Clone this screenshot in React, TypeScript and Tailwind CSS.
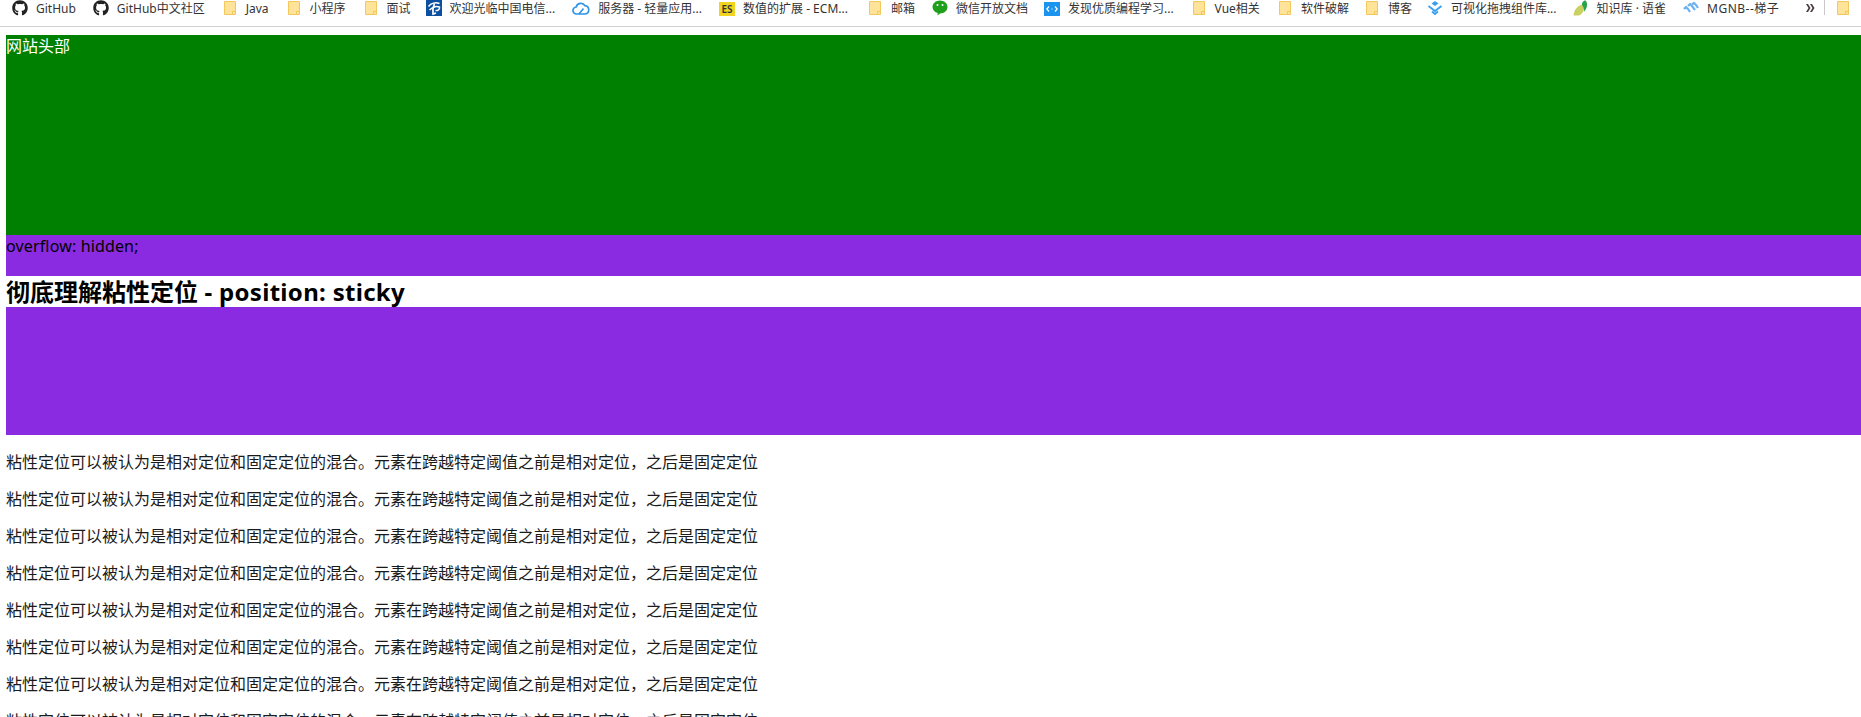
import React from 'react';
import { FaGithub } from 'react-icons/fa';

const cjk = "font-['Noto_Sans','Noto_Sans_CJK_SC',sans-serif]";

const Folder = () => (
  <svg width="16" height="16" viewBox="0 0 16 16" className="shrink-0">
    <path d="M2.5 1.500h11v13h-11z" fill="#ffe398" stroke="#f2c75c" />
    <path d="M10.500 14.500v-3h3" fill="#ffe398" stroke="#f2c75c" />
  </svg>
);

const GitHub = () => <FaGithub className="w-4 h-4 shrink-0 text-[#222]" />;

const Telecom = () => (
  <svg width="16" height="16" viewBox="0 0 16 16" className="shrink-0">
    <rect width="16" height="16" fill="#0b4f9e" />
    <path d="M2.500 6.500C5 3 9.500 2 13.500 3.500M3.500 10C6 7.500 10 5.500 13.500 7 14 9.500 11.500 11 9.500 10.500" fill="none" stroke="#fff" strokeWidth="1.500" />
    <path d="M8.500 3.500C7 7 6.500 10 7 14l3-1" fill="none" stroke="#fff" strokeWidth="1.700" />
  </svg>
);

const Cloud = () => (
  <svg width="18" height="16" viewBox="0 0 18 16" className="shrink-0">
    <path d="M4.700 14a3.500 3.500 0 0 1-.5-7A4.800 4.800 0 0 1 13 5.700 4.200 4.200 0 0 1 13.300 14z" fill="none" stroke="#2f95e8" strokeWidth="1.700" />
    <path d="M7 14l4.500-5.500" stroke="#2f95e8" strokeWidth="1.700" />
  </svg>
);

const Es = () => (
  <div className="w-4 h-[14px] mt-[2px] shrink-0 bg-[#f0d41f] flex items-center justify-center text-[10px] font-semibold leading-none text-[#333]">ES</div>
);

const Wechat = () => (
  <svg width="16" height="16" viewBox="0 0 16 16" className="shrink-0">
    <path d="M8 0.500c4.200 0 7.500 2.900 7.500 6.500s-3.300 6.500-7.500 6.500l-2.500 2 .2-2.400C2.700 12.200.5 9.800.5 7 .5 3.400 3.800.5 8 .5z" fill="#1f9f1c" />
    <circle cx="5.500" cy="5" r="1" fill="#fff" />
    <circle cx="10.500" cy="5" r="1" fill="#fff" />
  </svg>
);

const Code = () => (
  <svg width="16" height="16" viewBox="0 0 16 16" className="shrink-0">
    <rect y="2" width="16" height="14" fill="#1a94ee" />
    <path d="M5 6.500L2.800 9 5 11.500M11 6.500L13.200 9 11 11.500M7.500 9h1" fill="none" stroke="#fff" strokeWidth="1.200" />
  </svg>
);

const Chevrons = () => (
  <svg width="16" height="16" viewBox="0 0 16 16" className="shrink-0">
    <path d="M8 1l-3.500 2.500L8 6l3.500-2.500z" fill="#3aa0ee" />
    <path d="M1.500 6L8 11l6.500-5M5 11.500L8 14l3-2.500" fill="none" stroke="#3aa0ee" strokeWidth="1.800" />
  </svg>
);

const Yuque = () => (
  <svg width="16" height="16" viewBox="0 0 16 16" className="shrink-0">
    <path d="M0.500 15.500C1 10 4.500 5.500 9.500 4.500c2.500 3 1.500 9-3.500 11z" fill="#c9d163" />
    <path d="M9 5c-.3-2 1-4.500 3.500-4.500C15 3 14.500 8 11 11.500 11 9 10.500 6.500 9 5z" fill="#2ba24c" />
  </svg>
);

const Waves = () => (
  <svg width="16" height="16" viewBox="0 0 16 16" className="shrink-0">
    <path d="M1 9l2-2 2 2 2 3M5 6l2-2 2 2 3 4M9 4l2-1 2 2 2 3" fill="none" stroke="#6db2ef" strokeWidth="2.200" />
  </svg>
);

const bookmarks: { icon: React.ReactNode; label: string; gap?: string; text?: string }[] = [
  { icon: <GitHub />, label: 'GitHub' },
  { icon: <GitHub />, label: 'GitHub中文社区' },
  { icon: <Folder />, label: 'Java' },
  { icon: <Folder />, label: '小程序' },
  { icon: <Folder />, label: '面试', gap: 'mr-[15px]' },
  { icon: <Telecom />, label: '欢迎光临中国电信...' },
  { icon: <Cloud />, label: '服务器 - 轻量应用...' },
  { icon: <Es />, label: '数值的扩展 - ECM...', gap: 'mr-[19px]' },
  { icon: <Folder />, label: '邮箱' },
  { icon: <Wechat />, label: '微信开放文档', gap: 'mr-[16px]' },
  { icon: <Code />, label: '发现优质编程学习...' },
  { icon: <Folder />, label: 'Vue相关' },
  { icon: <Folder />, label: '软件破解', gap: 'mr-[15px]' },
  { icon: <Folder />, label: '博客', gap: 'mr-[15px]' },
  { icon: <Chevrons />, label: '可视化拖拽组件库...', gap: 'mr-[16px]' },
  { icon: <Yuque />, label: '知识库 · 语雀' },
  { icon: <Waves />, label: 'MGNB--梯子', gap: 'mr-[27px]', text: 'tracking-[0.5px]' },
];

const line = '粘性定位可以被认为是相对定位和固定定位的混合。元素在跨越特定阈值之前是相对定位，之后是固定定位';

export default function App() {
  return (
    <div className={`h-[717px] overflow-hidden bg-white text-black ${cjk}`}>
      <div className="h-[27px] border-b border-[#d0d0d0] flex items-start pl-3 text-xs text-[#333] whitespace-nowrap overflow-hidden">
        {bookmarks.map((b, i) => (
          <div key={i} className={`flex items-start gap-2 ${b.gap ?? 'mr-[17px]'}`}>
            {b.icon}
            <span className={`leading-[18px] ${b.text ?? ''}`}>{b.label}</span>
          </div>
        ))}
        <svg width="9" height="8" viewBox="0 0 9 8" className="mt-[4px] shrink-0">
          <path d="M0 0h2l2.500 4L2 8H0l2.500-4zM4 0h2l2.500 4L6 8H4l2.500-4z" fill="#4a3a40" />
        </svg>
        <div className="ml-[9px] w-px h-[15px] bg-[#c8c8c8] shrink-0" />
        <div className="ml-[10px]"><Folder /></div>
      </div>

      <div className="pl-[6px] pt-2">
        <div className="h-[200px] bg-[#008000] text-white text-base leading-[23px]">网站头部</div>
        <div className="h-[41px] bg-[#8a2be2] text-base leading-[23px] tracking-[0.15px]">overflow: hidden;</div>
        <h1 className="h-[31px] text-2xl font-bold leading-[32px]">
          彻底理解粘性定位<span className="tracking-[0.3px]"> - position: sticky</span>
        </h1>
        <div className="h-[128px] bg-[#8a2be2]" />
        <div className="pt-[17px]">
          {Array.from({ length: 8 }).map((_, i) => (
            <p key={i} className="text-base leading-[21px] mb-4 text-[#1a1a1a]">{line}</p>
          ))}
        </div>
      </div>
    </div>
  );
}
